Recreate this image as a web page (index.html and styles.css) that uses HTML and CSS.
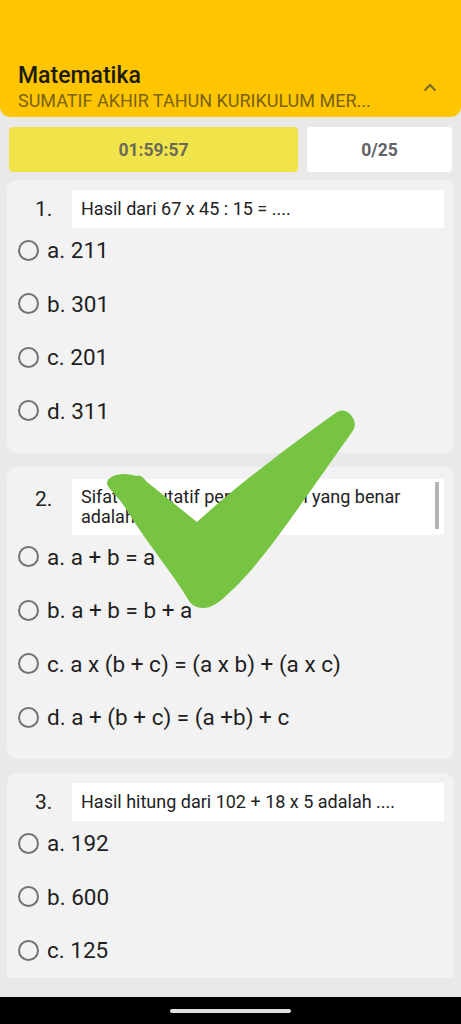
FILE: index.html
```html
<!DOCTYPE html>
<html lang="id">
<head>
  <meta charset="UTF-8" />
  <meta name="viewport" content="width=device-width, initial-scale=1.0" />
  <title>Matematika - Ujian</title>
  <link rel="stylesheet" href="styles.css">
</head>
<body>
  <div class="screen">
    <div class="status-bar"></div>
    <header class="appbar">
      <div class="appbar-text">
        <h1>Matematika</h1>
        <p>SUMATIF AKHIR TAHUN KURIKULUM MER...</p>
      </div>
      <svg class="chevron" width="14" height="9" viewBox="0 0 14 9"><path d="M1.5 7.5 L7 2 L12.5 7.5" fill="none" stroke="#7a6a2a" stroke-width="2"/></svg>
    </header>

    <div class="stats">
      <div class="timer">01:59:57</div>
      <div class="counter">0/25</div>
    </div>

    <main class="questions">
      <section class="card">
        <div class="q-head">
          <span class="q-num">1.</span>
          <div class="q-text">Hasil dari 67 x 45 : 15 = ....</div>
        </div>
        <ul class="options">
          <li><span class="radio"></span>a. 211</li>
          <li><span class="radio"></span>b. 301</li>
          <li><span class="radio"></span>c. 201</li>
          <li><span class="radio"></span>d. 311</li>
        </ul>
      </section>

      <section class="card">
        <div class="q-head">
          <span class="q-num">2.</span>
          <div class="q-text scroll">Sifat komutatif penjumlahan yang benar adalah ....<span class="scrollbar"></span></div>
        </div>
        <ul class="options">
          <li><span class="radio"></span>a. a + b = a</li>
          <li><span class="radio"></span>b. a + b = b + a</li>
          <li><span class="radio"></span>c. a x (b + c) = (a x b) + (a x c)</li>
          <li><span class="radio"></span>d. a + (b + c) = (a +b) + c</li>
        </ul>
      </section>

      <section class="card">
        <div class="q-head">
          <span class="q-num">3.</span>
          <div class="q-text">Hasil hitung dari 102 + 18 x 5 adalah ....</div>
        </div>
        <ul class="options">
          <li><span class="radio"></span>a. 192</li>
          <li><span class="radio"></span>b. 600</li>
          <li><span class="radio"></span>c. 125</li>
        </ul>
      </section>
    </main>

    <div class="nav-bar"><span class="pill"></span></div>

    <!-- tanda centang di atas konten -->
    <svg class="check" width="260" height="215" viewBox="0 0 260 215">
      <path d="M10 78 C18 72 30 74 36 76 C40 74 44 78 47 82 L97 122 C130 92 170 60 237 12 C243 8 250 12 253 18 C256 24 255 28 252 32 C225 70 210 92 197 110 C180 134 150 175 130 192 C120 202 112 208 103 208 C95 208 90 204 86 196 C70 170 45 140 28 112 C20 98 9 90 7 84 C7 81 8 79 10 78 Z" fill="#76c442"/>
    </svg>
  </div>
</body>
</html>
```

FILE: styles.css
```css
:root {
  --yellow: #fec500;
  --bg: #e9e9e9;
  --card: #f2f2f2;
  --text: #1f1f1f;
  --radio: #737373;
}
* { box-sizing: border-box; margin: 0; padding: 0; }
body {
  font-family: Roboto, 'Noto Sans', sans-serif;
  background: var(--bg);
  color: var(--text);
}
.screen {
  position: relative;
  width: 461px;
  height: 1024px;
  display: flex;
  flex-direction: column;
  overflow: hidden;
}
.status-bar {
  height: 55px;
  background: var(--yellow);
  flex-shrink: 0;
}
.appbar {
  height: 62px;
  flex-shrink: 0;
  background: var(--yellow);
  border-radius: 0 0 10px 10px;
  display: flex;
  align-items: center;
  justify-content: space-between;
  padding: 3px 24px 0 18px;
}
.appbar h1 {
  font-size: 23px;
  font-weight: 500;
  color: #1d1a10;
  line-height: 26px;
}
.appbar p {
  font-size: 18px;
  color: #7a6212;
  line-height: 22px;
  margin-top: 1px;
}
.chevron { margin-top: 0; }
.stats {
  display: flex;
  gap: 9px;
  padding: 10px 9px 0;
  flex-shrink: 0;
}
.timer, .counter {
  height: 45px;
  border-radius: 4px;
  display: flex;
  align-items: center;
  justify-content: center;
  font-size: 17.5px;
  font-weight: 700;
}
.timer {
  width: 289px;
  background: #f0e44a;
  color: #6b6a58;
}
.counter {
  flex: 1;
  background: #fff;
  color: #626262;
}
.questions {
  flex: 1;
  overflow: hidden;
  margin: 8px 7px 19px;
  display: flex;
  flex-direction: column;
  gap: 14px;
}
.card {
  background: var(--card);
  border-radius: 10px;
  padding: 10px 10px 20px 0;
  flex-shrink: 0;
}
.q-head {
  display: flex;
  align-items: flex-start;
}
.q-num {
  width: 65px;
  padding-left: 28px;
  font-size: 21px;
  line-height: 38px;
  color: #222;
}
.q-text {
  flex: 1;
  position: relative;
  background: #fff;
  font-size: 18px;
  line-height: 20px;
  padding: 9px 36px 9px 9px;
  color: #222;
}
.card:nth-child(2) .q-num { padding-top: 2px; line-height: 40px; }
.card:nth-child(2) .q-text { margin-top: 2px; padding-bottom: 8px; padding-top: 8px; }
.scrollbar {
  position: absolute;
  right: 5px;
  top: 3px;
  width: 4px;
  height: 47px;
  background: #b3b3b3;
}
.options {
  list-style: none;
  display: flex;
  flex-direction: column;
  gap: 9.5px;
}
.options li {
  height: 44px;
  display: flex;
  align-items: center;
  font-size: 22.5px;
  color: var(--text);
  padding-left: 11px;
  white-space: pre;
}
.radio {
  width: 21px;
  height: 21px;
  border: 2px solid var(--radio);
  border-radius: 50%;
  margin-right: 8px;
  flex-shrink: 0;
}
.nav-bar {
  height: 27px;
  flex-shrink: 0;
  background: #000;
  display: flex;
  align-items: center;
  justify-content: center;
}
.pill {
  width: 121px;
  height: 4px;
  border-radius: 2px;
  background: #e0e0e0;
}
.check {
  position: absolute;
  left: 100px;
  top: 400px;
}
```
